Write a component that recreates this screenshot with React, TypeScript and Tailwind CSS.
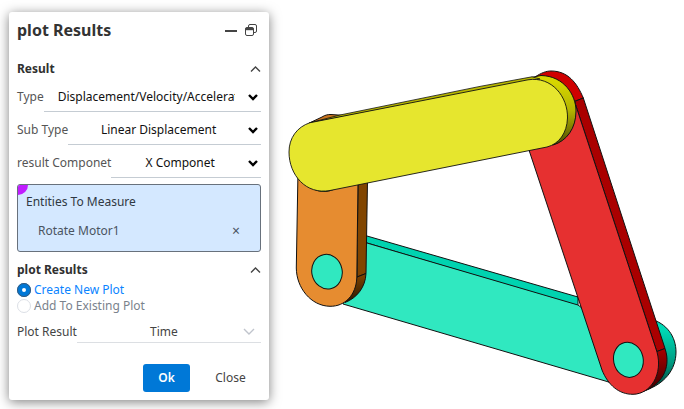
import { useState } from "react";
import type { ReactNode } from "react";

function Chevron({ className, d }: { className: string; d: string }) {
  return (
    <svg viewBox="0 0 12 12" className={className} fill="none" aria-hidden="true">
      <path d={d} stroke="currentColor" />
    </svg>
  );
}

function SectionHeader({ title, open, onToggle }: { title: string; open: boolean; onToggle: () => void }) {
  return (
    <button
      type="button"
      aria-expanded={open}
      onClick={onToggle}
      className="flex h-5 w-full items-center justify-between leading-5 font-bold text-[#303030]"
    >
      {title}
      <Chevron
        className={open ? "size-3 stroke-[1.4] text-[#444]" : "size-3 rotate-180 stroke-[1.4] text-[#444]"}
        d="M2 8.5 6.5 4 11 8.5"
      />
    </button>
  );
}

function SelectRow({
  id,
  label,
  options,
  muted = false,
}: {
  id: string;
  label: string;
  options: string[];
  muted?: boolean;
}) {
  return (
    <div className={muted ? "flex h-[23px] items-stretch" : "flex h-[27px] items-stretch"}>
      <label htmlFor={id} className={muted ? "shrink-0 leading-6 text-[#444]" : "shrink-0 leading-6 text-[#555]"}>
        {label}
      </label>
      <div
        className={
          muted
            ? "relative flex min-w-0 flex-1 border-b border-[#dcdfe3]"
            : "relative flex min-w-0 flex-1 border-b border-[#c5ccd3]"
        }
      >
        <select
          id={id}
          className={
            muted
              ? "w-full appearance-none bg-transparent pt-0.5 pr-6 pl-3.5 text-center text-[#444] outline-none"
              : "w-full appearance-none bg-transparent pr-[26px] pb-0.5 pl-3.5 text-center text-[#111] outline-none"
          }
        >
          {options.map((o) => (
            <option key={o}>{o}</option>
          ))}
        </select>
        {muted ? (
          <Chevron
            className="pointer-events-none absolute top-1.5 right-1.5 size-3 stroke-[1.4] text-[#c0c4cc]"
            d="M1 3 6 8 11 3"
          />
        ) : (
          <Chevron
            className="pointer-events-none absolute top-1.5 right-0.5 size-3 stroke-[2.4] text-black"
            d="M2 4 6 8 10 4"
          />
        )}
      </div>
    </div>
  );
}

function RadioOption({
  checked,
  onChange,
  children,
}: {
  checked: boolean;
  onChange: () => void;
  children: ReactNode;
}) {
  return (
    <label
      className={
        checked
          ? "flex h-4 items-center gap-[3px] leading-4 text-[#0a84ff]"
          : "flex h-4 items-center gap-[3px] leading-4 text-[#7a828c]"
      }
    >
      <input
        type="radio"
        name="plot-target"
        checked={checked}
        onChange={onChange}
        className="size-3.5 shrink-0 appearance-none rounded-full border border-[#dcdfe6] bg-white checked:border-[5px] checked:border-[#0078d7] checked:outline checked:-outline-offset-1 checked:outline-[#3c5a78]"
      />
      {children}
    </label>
  );
}

function Linkage() {
  return (
    <svg
      viewBox="280 0 404 409"
      role="img"
      aria-label="Four-bar linkage"
      className="block min-w-0 flex-1 self-start"
      stroke="#111"
      strokeWidth="1"
      strokeLinejoin="round"
    >
      <defs>
        <linearGradient id="teal-end" x1="0" y1="0" x2="0" y2="1">
          <stop offset="0.15" stopColor="#00d9b5" />
          <stop offset="0.6" stopColor="#009d83" />
          <stop offset="1" stopColor="#003f35" />
        </linearGradient>
        <linearGradient id="red-end" x1="0" y1="0" x2="0" y2="1">
          <stop offset="0" stopColor="#a90000" />
          <stop offset="1" stopColor="#3c0000" />
        </linearGradient>
        <linearGradient id="yellow-end" x1="0" y1="0" x2="0" y2="1">
          <stop offset="0.1" stopColor="#d6d600" />
          <stop offset="0.5" stopColor="#b4b400" />
          <stop offset="1" stopColor="#4c4c00" />
        </linearGradient>
        <linearGradient id="orange-end" x1="0" y1="0" x2="0" y2="1">
          <stop offset="0" stopColor="#824500" />
          <stop offset="1" stopColor="#2c1700" />
        </linearGradient>
      </defs>

      <path fill="url(#teal-end)" d="M650 319C667 323 676 337 676 352C676 370 664 384 646 390L630 380Z" />
      <path fill="#00d3b0" d="M355 233L367 236L578 297V306L367 243Z" />
      <path fill="#30e8c0" d="M355 240L367 243L578 305L625 340L620 386L607 381.5L343 304Z" />

      <path fill="#c9741f" d="M310 122.7L322 117C325 115 328 114.4 331 114.5L342 115.3L330 123Z" />
      <path fill="#814500" d="M358 180H367.5L366 273.5L357 277Z" />
      <path fill="url(#orange-end)" d="M357 277L366 273.5C365.5 287 357 298 345 302.5Z" />
      <path
        fill="#e68c30"
        d="M298 170L296.3 268C296.5 288 311 306 330 306.3C345 306.5 356 295 356.8 278L358.4 150L310 150Z"
      />
      <ellipse fill="#e6e62e" cx="324" cy="186" rx="12" ry="5.5" />
      <ellipse fill="#30e8c0" cx="327" cy="271.7" rx="15.2" ry="17.4" transform="rotate(-12 327 271.7)" />

      <path fill="#cf0000" d="M535 77C541 73 546 71 551 71C568 71 577 83 583.3 98L574.5 101.5L560 90Z" />
      <path fill="#aa0000" d="M574.5 101.5L583.3 98L665 348.5L656.8 351.5Z" />
      <path fill="url(#red-end)" d="M656.8 351.5L665 348.5C672 369 660 386 643 391.5Z" />
      <path
        fill="#e63030"
        d="M526 140L529.3 151L602 370C608 385 619 394.5 633 394.3C651 394 663 374 657 352L574.5 101.5Z"
      />
      <ellipse fill="#30e8c0" cx="628.4" cy="359.8" rx="14.8" ry="17.7" transform="rotate(-12 628.4 359.8)" />

      <path fill="url(#yellow-end)" d="M530 77.7L541 75.5C564 76 576 95 576 111C576 128 567 141 553 145L540 140Z" />
      <path fill="#b8b800" strokeWidth="0.8" d="M309 123L340 115L480 86.4L532 76.8L540 79L320 121Z" />
      <path
        fill="#e6e62e"
        strokeWidth="0.9"
        d="M310 122.7L528 79.8C552 76 568 97 567.5 118C567 133 559 144 547 147L330 190.5C306 195 289 175 289 152C289 138 297 127 310 122.7Z"
      />
    </svg>
  );
}

export default function App() {
  const [resultOpen, setResultOpen] = useState(true);
  const [plotOpen, setPlotOpen] = useState(true);
  const [target, setTarget] = useState("new");
  const [entities, setEntities] = useState(["Rotate Motor1"]);

  return (
    <main className="flex min-h-screen items-start bg-white pl-[9px] font-['Noto_Sans','Open_Sans',sans-serif] text-xs">
      <section className="mt-3 mr-[11px] w-[260px] shrink-0 rounded-[3px] bg-white px-2 pb-2 shadow-[0_2px_12px_rgba(0,0,0,0.5)]">
        <header className="flex h-9 items-center justify-between pr-1">
          <h1 className="text-base leading-6 font-bold text-[#333]">plot Results</h1>
          <div className="flex items-center gap-2 text-[#444]">
            <button type="button" aria-label="Minimize">
              <svg viewBox="0 0 12 12" className="size-3" aria-hidden="true">
                <path d="M0 7H12" stroke="currentColor" strokeWidth="2" />
              </svg>
            </button>
            <button type="button" aria-label="Restore">
              <svg viewBox="0 0 12 12" className="size-3" fill="none" stroke="currentColor" aria-hidden="true">
                <path d="M3.5 3V2Q3.5.5 5 .5H10Q11.5.5 11.5 2V7Q11.5 8.5 10 8.5H9" />
                <rect x="0.5" y="3.5" width="8" height="8" rx="1.5" />
                <path d="M.5 5H8.5" strokeWidth="2.4" />
              </svg>
            </button>
          </div>
        </header>

        <div className="mt-[11px]">
          <SectionHeader title="Result" open={resultOpen} onToggle={() => setResultOpen(!resultOpen)} />
        </div>
        {resultOpen && (
          <div className="mt-1.5">
            <div className="flex flex-col gap-1.5">
              <SelectRow id="type" label="Type" options={["Displacement/Velocity/Acceleration"]} />
              <SelectRow id="sub-type" label="Sub Type" options={["Linear Displacement"]} />
              <SelectRow id="component" label="result Componet" options={["X Componet", "Y Componet", "Z Componet"]} />
            </div>
            <div className="relative mt-1.5 h-[68px] overflow-hidden rounded-[3px] border border-[#68717c] bg-[#d4e8ff] px-2 pt-[7px]">
              <span className="absolute top-0 left-0 size-2.5 rounded-br-full bg-[#c01cff]" />
              <h2 className="leading-5 text-[#303842]">Entities To Measure</h2>
              <ul className="mt-[9px] pr-3 pl-3">
                {entities.map((e) => (
                  <li key={e} className="flex items-center justify-between leading-5 text-[#4a545f]">
                    {e}
                    <button
                      type="button"
                      aria-label={`Remove ${e}`}
                      onClick={() => setEntities([])}
                      className="text-sm leading-5"
                    >
                      ×
                    </button>
                  </li>
                ))}
              </ul>
            </div>
          </div>
        )}

        <div className="mt-2">
          <SectionHeader title="plot Results" open={plotOpen} onToggle={() => setPlotOpen(!plotOpen)} />
        </div>
        {plotOpen && (
          <div className="mt-0.5">
            <RadioOption checked={target === "new"} onChange={() => setTarget("new")}>
              Create New Plot
            </RadioOption>
            <RadioOption checked={target === "existing"} onChange={() => setTarget("existing")}>
              Add To Existing Plot
            </RadioOption>
            <div className="mt-1.5">
              <SelectRow id="plot-result" label="Plot Result" options={["Time"]} muted />
            </div>
          </div>
        )}

        <footer className="mt-[21px] flex justify-end gap-1">
          <button type="button" className="h-7 w-[47px] rounded-[3px] bg-[#0078d7] font-semibold text-white">
            Ok
          </button>
          <button type="button" className="h-7 w-[67px] pl-1.5 text-[#444]">
            Close
          </button>
        </footer>
      </section>
      <Linkage />
    </main>
  );
}
